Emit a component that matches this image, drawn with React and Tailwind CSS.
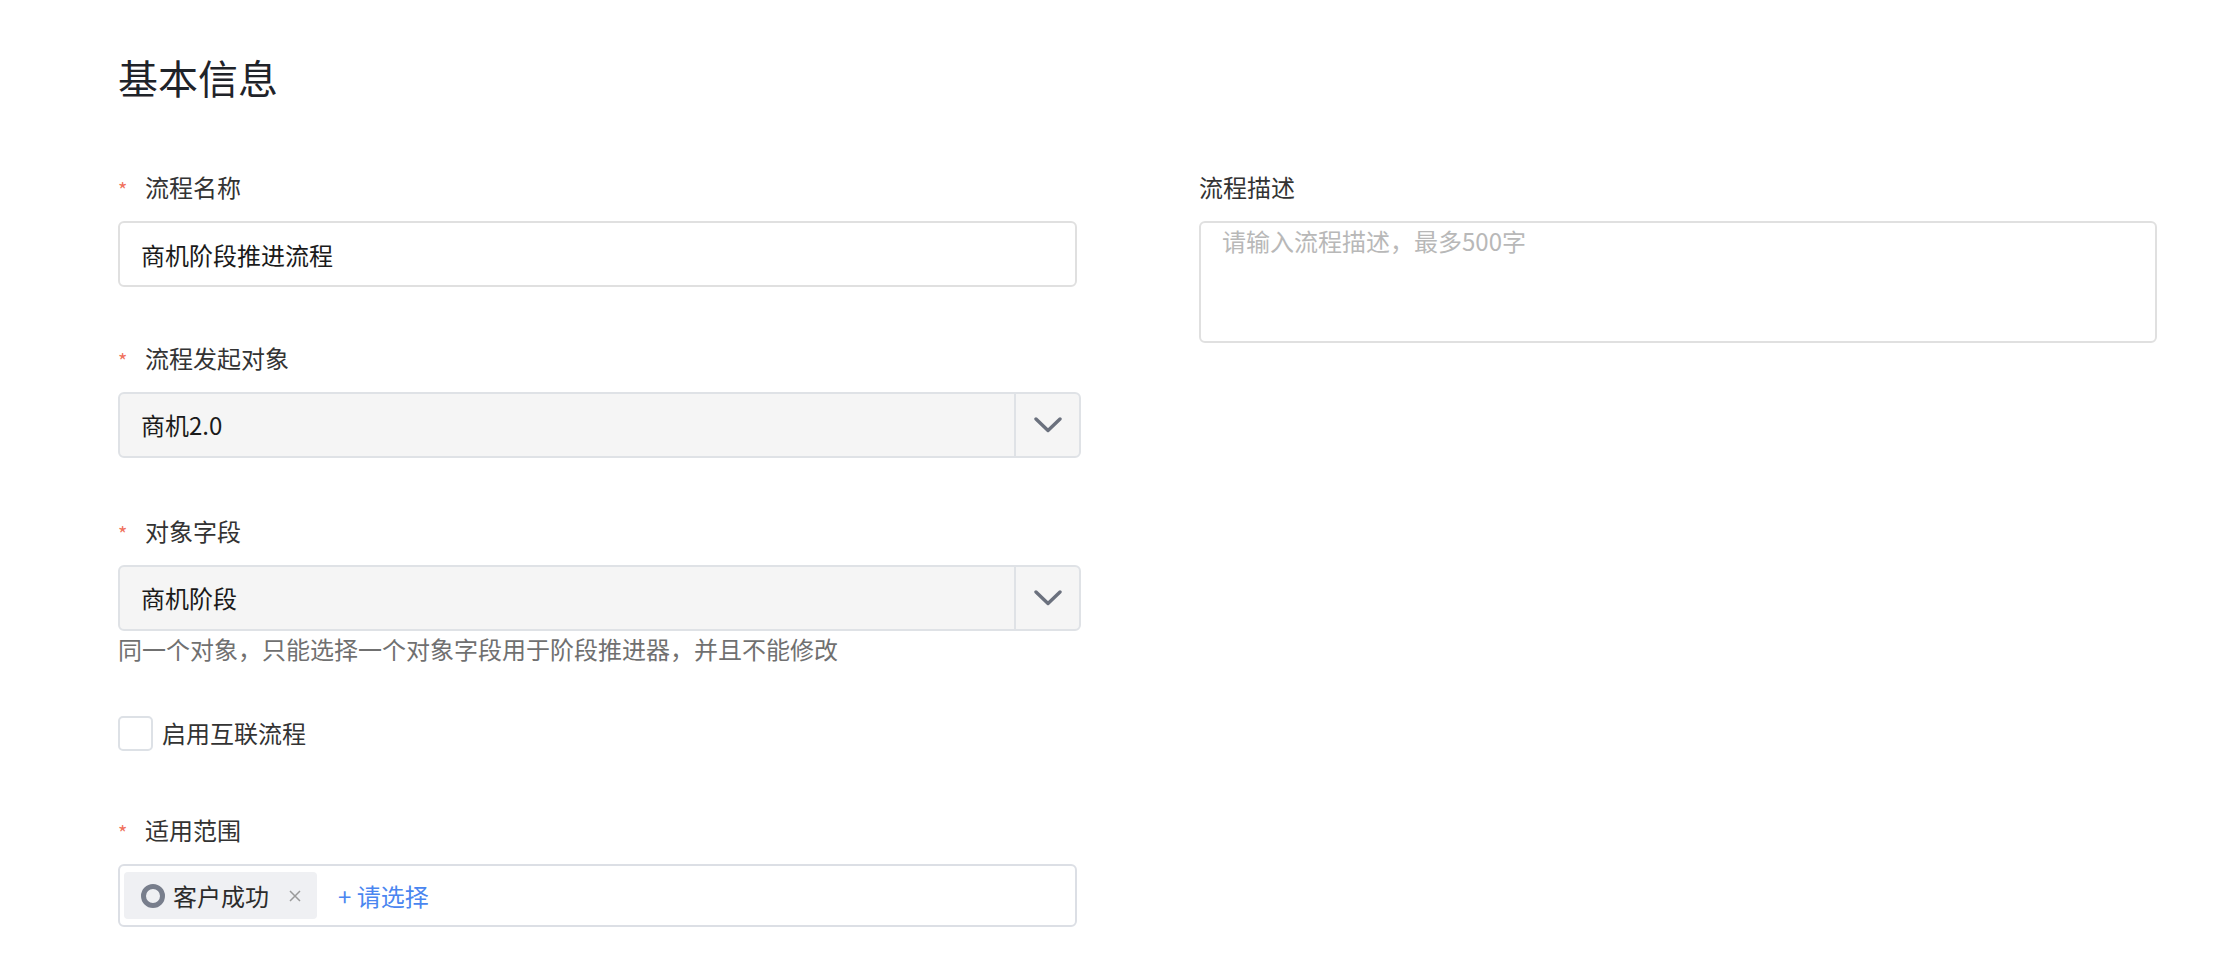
import React from "react";

const FONT = { fontFamily: '"Noto Sans CJK SC", "Noto Sans", "Liberation Sans", sans-serif' };

function Label({ children, required }) {
  return (
    <div className="flex h-[34px] items-center text-[24px] leading-[34px] text-[#333333]">
      {required ? (
        <span className="inline-block w-[27px] translate-y-[3px] text-[20px] leading-[20px] text-[#f0715c]">*</span>
      ) : null}
      <span>{children}</span>
    </div>
  );
}

function Chevron() {
  return (
    <svg width="28" height="16" viewBox="0 0 28 16" fill="none">
      <polyline points="2,2 14,13.5 26,2" stroke="#6b717e" strokeWidth="3.4" strokeLinecap="round" strokeLinejoin="round" />
    </svg>
  );
}

function Select({ value }) {
  return (
    <div className="flex h-[66px] w-[963px] items-stretch rounded-[6px] border-2 border-[#dfe2e6] bg-[#f5f5f5]">
      <div className="flex flex-1 items-center pl-[21px] text-[24px] text-[#1a1a1a]">{value}</div>
      <div className="flex w-[65px] items-center justify-center border-l-2 border-[#dfe2e6]">
        <Chevron />
      </div>
    </div>
  );
}

export default function App() {
  return (
    <div className="min-h-screen bg-white" style={FONT}>
      <div className="pl-[118px] pt-[49px]">
        <h2 className="text-[40px] font-normal leading-[56px] text-[#1f2329]">基本信息</h2>

        <div className="mt-[65px] flex items-start">
          {/* left column */}
          <div className="w-[963px]">
            <Label required>流程名称</Label>
            <input
              readOnly
              value="商机阶段推进流程"
              className="mt-[17px] block h-[66px] w-[959px] rounded-[6px] border-2 border-[#e0e0e0] bg-white pl-[21px] text-[24px] text-[#1a1a1a] outline-none"
            />

            <div className="mt-[54px]">
              <Label required>流程发起对象</Label>
            </div>
            <div className="mt-[17px]">
              <Select value="商机2.0" />
            </div>

            <div className="mt-[56px]">
              <Label required>对象字段</Label>
            </div>
            <div className="mt-[17px]">
              <Select value="商机阶段" />
            </div>
            <div className="mt-[1px] h-[34px] text-[24px] leading-[34px] text-[#707070]">
              同一个对象，只能选择一个对象字段用于阶段推进器，并且不能修改
            </div>

            <label className="mt-[49px] flex h-[36px] items-center">
              <span className="block h-[35px] w-[35px] rounded-[5px] border-2 border-[#dde1e6] bg-white" />
              <span className="ml-[9px] text-[24px] leading-[34px] text-[#333333]">启用互联流程</span>
            </label>

            <div className="mt-[62px]">
              <Label required>适用范围</Label>
            </div>
            <div className="mt-[17px] flex h-[63px] w-[959px] items-center rounded-[6px] border-2 border-[#dcdfe5] bg-white pl-[4px]">
              <div className="flex h-[47px] items-center rounded-[4px] bg-[#eff0f3] pl-[17px] pr-[16px]">
                <span className="block h-[24px] w-[24px] rounded-full border-[5px] border-[#787e8c]" />
                <span className="ml-[8px] text-[24px] leading-[34px] text-[#2b2b2b]">客户成功</span>
                <svg className="ml-[20px]" width="12" height="12" viewBox="0 0 12 12">
                  <path d="M1 1 L11 11 M11 1 L1 11" stroke="#9a9a9a" strokeWidth="1.5" />
                </svg>
              </div>
              <span className="ml-[21px] text-[24px] leading-[34px] text-[#4a86f0]">+ 请选择</span>
            </div>
          </div>

          {/* right column */}
          <div className="ml-[118px] w-[958px]">
            <Label>流程描述</Label>
            <textarea
              readOnly
              placeholder="请输入流程描述，最多500字"
              className="mt-[17px] block h-[122px] w-[958px] resize-none rounded-[6px] border-2 border-[#e0e0e0] bg-white pl-[21px] pt-[1px] text-[24px] leading-[34px] text-[#1a1a1a] outline-none placeholder:text-[#b8b8b8]"
            />
          </div>
        </div>
      </div>
    </div>
  );
}
